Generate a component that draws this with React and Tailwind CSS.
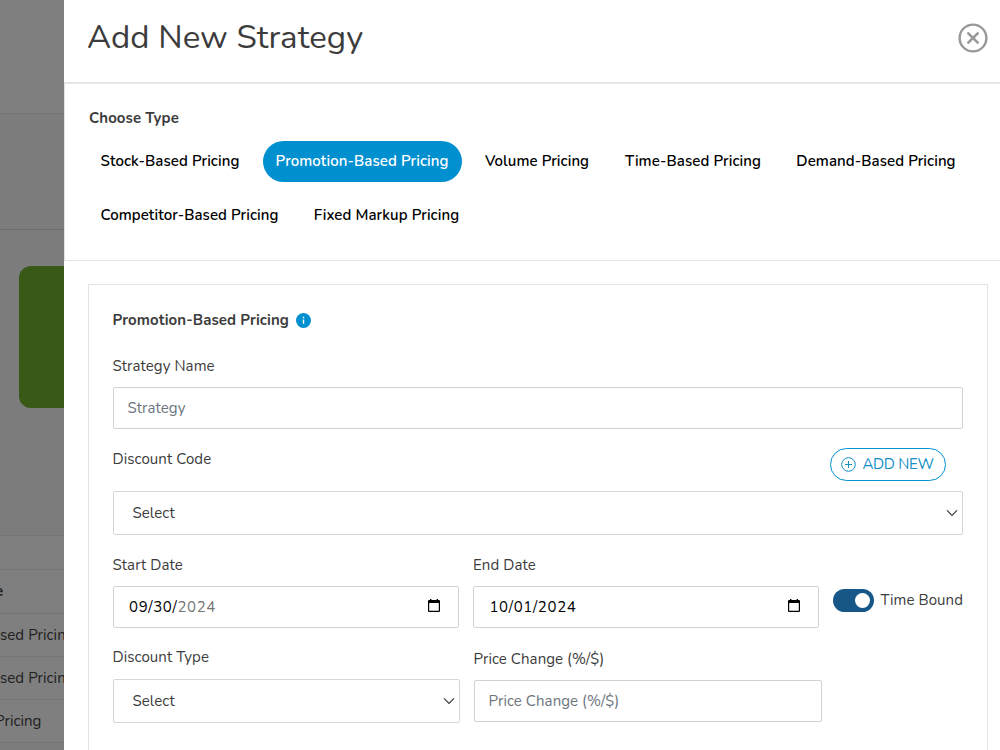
import React, { useState } from "react";

const types = [
  { label: "Stock-Based Pricing", width: "w-[165px]" },
  { label: "Promotion-Based Pricing", width: "w-[199px]" },
  { label: "Volume Pricing", width: "w-[131px]" },
  { label: "Time-Based Pricing", width: "w-[161px]" },
  { label: "Demand-Based Pricing", width: "w-[185px]" },
  { label: "Competitor-Based Pricing", width: "w-[204px]" },
  { label: "Fixed Markup Pricing", width: "w-[170px]" },
];

function Chevron() {
  return (
    <svg width="12" height="8" viewBox="0 0 12 8" fill="none" stroke="#3c3c3c" strokeWidth="1.2">
      <path d="M1 1.3 6 6.3 11 1.3" />
    </svg>
  );
}

function CalendarIcon() {
  return (
    <svg width="12" height="13" viewBox="0 0 12 13" fill="#000" className="-mt-0.5">
      <path d="M2 0h1.4v1h5.2V0H10v1h1a1 1 0 0 1 1 1v10a1 1 0 0 1-1 1H1a1 1 0 0 1-1-1V2a1 1 0 0 1 1-1h1zM1.2 4.1v7.7h9.6V4.1z" />
    </svg>
  );
}

function Select({ className }) {
  return (
    <button className={`flex h-11 items-center justify-between rounded-[2px] border border-[#d4d6d9] pl-[19px] text-[#3c3c3c] ${className}`}>
      <span>Select</span>
      <Chevron />
    </button>
  );
}

function Backdrop() {
  return (
    <aside className="flex w-16 shrink-0 flex-col overflow-hidden whitespace-nowrap bg-[#7c7c7c] text-[#202020]">
      <div className="h-[114px] shrink-0 border-b border-[#757575] bg-[#7f7f7f]" />
      <div className="h-[116px] shrink-0 border-b border-[#6c6c6c]" />
      <div className="mt-9 ml-[19px] h-[142px] shrink-0 rounded-l-[12px] bg-[#395917]" />
      <div className="mt-[127px] h-[35px] shrink-0 border-y border-[#757575] bg-[#7f7f7f]" />
      <div className="flex h-11 shrink-0 items-center border-b border-[#737373] bg-[#7f7f7f] pb-0.5 font-bold">
        <span className="-ml-[5px]">e</span>
      </div>
      <div className="flex h-[43px] shrink-0 items-center border-b border-[#757575] bg-[#7f7f7f]">
        sed Pricing
      </div>
      <div className="flex h-[43px] shrink-0 items-center border-b border-[#757575] bg-[#7f7f7f]">
        sed Pricing
      </div>
      <div className="flex h-[43px] shrink-0 items-center border-b border-[#757575] bg-[#7f7f7f]">
        <span className="-ml-[5px]">Pricing</span>
      </div>
      <div className="grow bg-[#7c7c7c]" />
    </aside>
  );
}

export default function App() {
  const [activeType, setActiveType] = useState("Promotion-Based Pricing");
  const [timeBound, setTimeBound] = useState(true);

  return (
    <div className="flex h-[750px] w-[1000px] overflow-hidden bg-white font-['Nunito','Lato',sans-serif] text-[15px] leading-5 tracking-[0.08px] text-[#3c3c3c]">
      <Backdrop />
      <main className="flex min-w-0 grow flex-col">
        <header className="flex h-[84px] shrink-0 items-center justify-between border-b-2 border-[#e6e6e6] pr-3 pb-1.5 pl-6">
          <h1 className="-ml-px text-[33px] leading-10 tracking-[0.07px]">Add New Strategy</h1>
          <button aria-label="Close">
            <svg width="30" height="30" viewBox="0 0 30 30" fill="none" stroke="#989898">
              <circle cx="15" cy="15" r="13.4" strokeWidth="2.4" />
              <path d="M10.3 10.3 19.7 19.7M19.7 10.3 10.3 19.7" strokeWidth="2.6" strokeLinecap="round" />
            </svg>
          </button>
        </header>

        <section className="h-[177px] shrink-0 border-b border-l border-[#e3e3e3] pt-6 pl-6">
          <h2 className="font-bold">Choose Type</h2>
          <div className="mt-[13px] -ml-[1.5px] flex flex-wrap gap-x-[10px] gap-y-[13px]">
            {types.map((type) => (
              <button
                key={type.label}
                onClick={() => setActiveType(type.label)}
                className={`h-[41px] shrink-0 rounded-full pb-px text-center font-semibold whitespace-nowrap ${type.width} ${
                  activeType === type.label ? "bg-[#008fcf] text-white" : "text-black"
                }`}
              >
                {type.label}
              </button>
            ))}
          </div>
        </section>

        <section className="mt-[23px] mr-3 ml-6 grow border border-b-0 border-[#e3e3e3] pt-[25px] pr-6 pl-[23.5px]">
          <div className="flex items-center gap-2">
            <h3 className="font-bold">Promotion-Based Pricing</h3>
            <svg width="15" height="15" viewBox="0 0 15 15" className="mt-px -ml-px">
              <circle cx="7.5" cy="7.5" r="7.5" fill="#008fcf" />
              <path d="M7.5 6.6v4.2M7.5 3.8v1.4" stroke="#fff" strokeWidth="1.4" />
            </svg>
          </div>

          <label className="mt-[26px] block">Strategy Name</label>
          <input
            placeholder="Strategy"
            className="mt-[11px] block h-[42px] w-full rounded-[2px] border border-[#cfd3d7] px-[14px] placeholder:text-[#6c757d]"
          />

          <div className="mt-[19px] flex h-[33px] justify-between pr-[17.5px]">
            <label className="mt-px">Discount Code</label>
            <button className="flex w-[116px] items-center justify-center gap-1.5 rounded-full border border-[#008fcf] pb-px text-[#168fc5]">
              <svg width="15" height="15" viewBox="0 0 15 15" fill="none" stroke="currentColor" className="mt-px">
                <circle cx="7.5" cy="7.5" r="6.8" />
                <path d="M7.5 4v7M4 7.5h7" />
              </svg>
              <span className="tracking-[-0.3px]">ADD NEW</span>
            </button>
          </div>
          <Select className="mt-[10px] w-full pr-1" />

          <div className="mt-5 flex gap-[14px]">
            <div className="w-[347px]">
              <label className="block">Start Date</label>
              <div className="mt-[11px] flex h-[42px] items-center justify-between rounded-[2px] border border-[#cfd3d7] pr-[18px] pb-px pl-[15.5px] text-black">
                <span className="tracking-[0.65px]">
                  09/30/<span className="text-[#757575]">2024</span>
                </span>
                <CalendarIcon />
              </div>
            </div>
            <div className="w-[347px]">
              <label className="block">End Date</label>
              <div className="mt-[11px] flex h-[42px] items-center justify-between rounded-[2px] border border-[#cfd3d7] pr-[18px] pb-px pl-[15.5px] text-black">
                <span className="tracking-[0.65px]">10/01/2024</span>
                <CalendarIcon />
              </div>
            </div>
            <div className="mt-[34px] flex h-[23px] items-center gap-1.5 whitespace-nowrap">
              <button
                role="switch"
                aria-checked={timeBound}
                aria-label="Time Bound"
                onClick={() => setTimeBound(!timeBound)}
                className={`flex h-[23px] w-[41px] items-center rounded-full px-1 ${
                  timeBound ? "justify-end bg-[#165788]" : "justify-start bg-[#b5b5b5]"
                }`}
              >
                <span className="size-[15px] rounded-full bg-white" />
              </button>
              <span className="-mt-0.5">Time Bound</span>
            </div>
          </div>

          <div className="mt-[19px] flex gap-[14px]">
            <div className="w-[347px]">
              <label className="block">Discount Type</label>
              <Select className="mt-3 w-full pr-1" />
            </div>
            <div className="mt-0.5 w-[348px]">
              <label className="block">Price Change (%/$)</label>
              <input
                placeholder="Price Change (%/$)"
                className="mt-[11px] block h-[42px] w-full rounded-[2px] border border-[#cfd3d7] px-[14px] placeholder:text-[#6c757d]"
              />
            </div>
          </div>
        </section>
      </main>
    </div>
  );
}
